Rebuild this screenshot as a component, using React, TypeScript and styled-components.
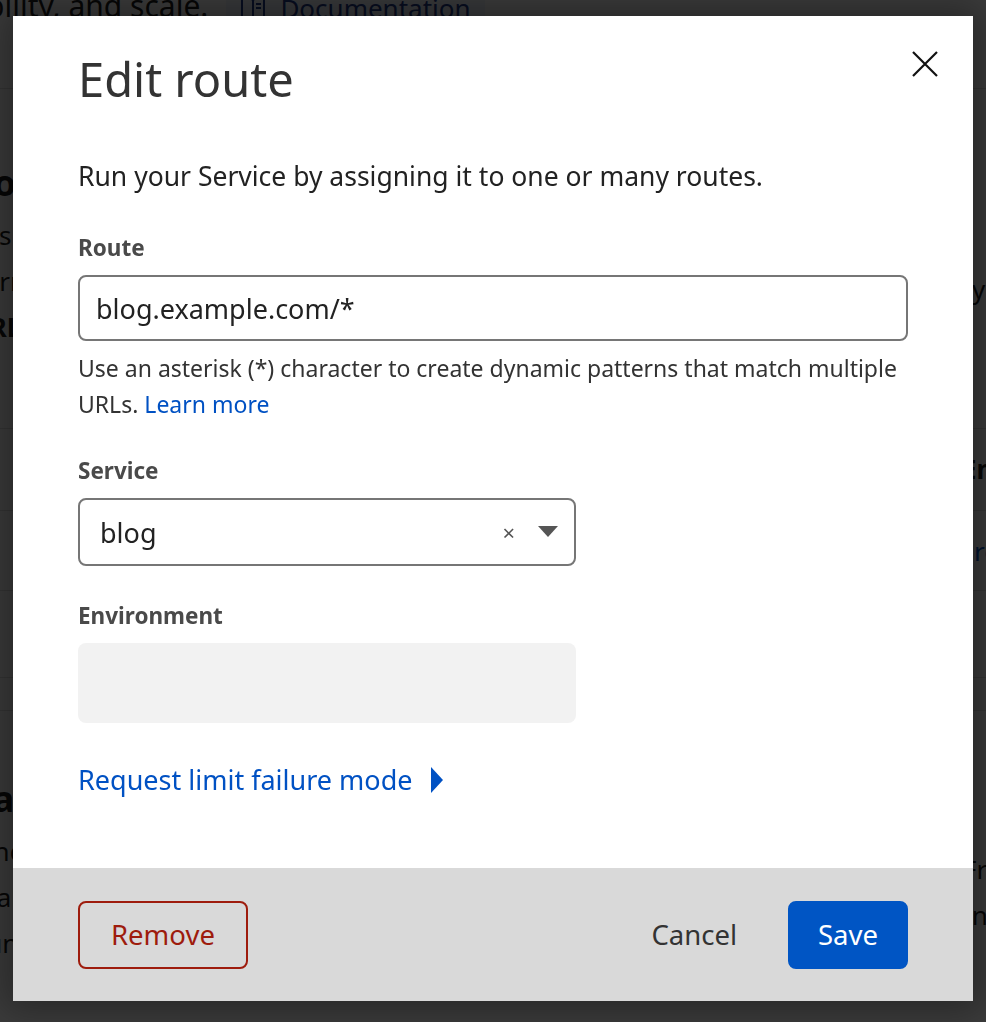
import React from "react";
import styled, { createGlobalStyle } from "styled-components";

const GlobalStyle = createGlobalStyle`
  html, body {
    margin: 0;
    padding: 0;
    height: 100%;
    overflow: hidden;
    background: #fff;
    font-family: "Noto Sans", "Open Sans", sans-serif;
  }
`;

// --- page behind the dialog ---
const Page = styled.div`
  width: 986px;
  height: 1022px;
  overflow: hidden;
  background: #fff;
  color: #1d1d1d;
`;

const PageTop = styled.div`
  display: flex;
  align-items: flex-start;
  gap: 18px;
  margin-top: -14px;
  margin-left: -14px;
  height: 102px;
  font-size: 30px;
  line-height: 40px;
  border-bottom: 1px solid #ddd;
`;

const DocButton = styled.span`
  display: inline-flex;
  align-items: center;
  gap: 14px;
  padding: 0 14px;
  height: 44px;
  background: #eef3fb;
  color: #1f3a8a;
  font-size: 26px;
  border-radius: 6px;
`;

const PageSection = styled.div<{ $h: number }>`
  display: flex;
  justify-content: space-between;
  height: ${(p) => p.$h}px;
  border-bottom: 1px solid #ddd;
`;

const Col = styled.div<{ $right?: boolean; $top?: number }>`
  display: flex;
  flex-direction: column;
  gap: 14px;
  padding-top: ${(p) => p.$top ?? 26}px;
  margin-left: ${(p) => (p.$right ? "0" : "-30px")};
  margin-right: ${(p) => (p.$right ? "-30px" : "0")};
  font-size: 26px;
  line-height: 32px;
`;

const PageHeading = styled.div`
  font-size: 36px;
  line-height: 44px;
  font-weight: 700;
`;

const PageLink = styled.div`
  color: #0051c3;
`;

const Overlay = styled.div`
  position: fixed;
  inset: 0;
  background: rgba(0, 0, 0, 0.77);
`;

// --- dialog ---
const Dialog = styled.div`
  position: fixed;
  top: 16px;
  left: 13px;
  width: 960px;
  height: 985px;
  background: #fff;
  display: flex;
  flex-direction: column;
  box-shadow: 0 0 36px 10px rgba(0, 0, 0, 0.35);
`;

const Body = styled.div`
  flex: 1;
  padding: 35px 65px 0;
  display: flex;
  flex-direction: column;
`;

const Header = styled.div`
  display: flex;
  justify-content: space-between;
  align-items: flex-start;
`;

const Title = styled.h1`
  margin: 0;
  font-size: 47px;
  line-height: 56px;
  font-weight: 400;
  color: #333;
`;

const CloseButton = styled.button`
  border: 0;
  background: none;
  padding: 0;
  margin: -7px -37px 0 0;
  width: 40px;
  height: 40px;
  display: flex;
  align-items: center;
  justify-content: center;
  cursor: pointer;
`;

const Description = styled.p`
  margin: 51px 0 0;
  font-size: 26.5px;
  line-height: 36px;
  color: #222;
`;

const Field = styled.div<{ $top: number }>`
  margin-top: ${(p) => p.$top}px;
  display: flex;
  flex-direction: column;
`;

const Label = styled.label`
  font-size: 22.5px;
  line-height: 28px;
  font-weight: 700;
  color: #4a4a4a;
  margin-bottom: 13px;
`;

const TextInput = styled.div<{ $width?: number; $height: number }>`
  box-sizing: border-box;
  width: ${(p) => (p.$width ? `${p.$width}px` : "100%")};
  height: ${(p) => p.$height}px;
  border: 2px solid #767676;
  border-radius: 8px;
  display: flex;
  align-items: center;
  padding: 0 16px;
  font-size: 27px;
  color: #222;
`;

const SelectValue = styled.span`
  flex: 1;
  padding-left: 4px;
`;

const ClearIcon = styled.span`
  color: #555;
  font-size: 22px;
  margin-right: 23px;
  line-height: 1;
`;

const DisabledBox = styled.div`
  width: 498px;
  height: 80px;
  border-radius: 8px;
  background: #f2f2f2;
`;

const Helper = styled.p`
  margin: 9px 0 0;
  font-size: 23px;
  line-height: 36px;
  color: #333;
`;

const Link = styled.a`
  color: #0051c3;
  text-decoration: none;
`;

const Disclosure = styled.a`
  margin-top: 37px;
  display: flex;
  align-items: center;
  gap: 18px;
  font-size: 27px;
  line-height: 40px;
  color: #0051c3;
  text-decoration: none;
`;

const Footer = styled.div`
  height: 133px;
  box-sizing: border-box;
  background: #d9d9d9;
  padding: 0 65px;
  display: flex;
  align-items: center;
  justify-content: space-between;
`;

const Actions = styled.div`
  display: flex;
  align-items: center;
  gap: 49px;
`;

const Button = styled.button<{ $variant: "danger" | "plain" | "primary" }>`
  box-sizing: border-box;
  height: 68px;
  border-radius: 8px;
  font-family: inherit;
  font-size: 27.5px;
  cursor: pointer;
  padding: 0 ${(p) => (p.$variant === "plain" ? 0 : p.$variant === "primary" ? 28 : 31)}px;
  border: 2px solid
    ${(p) => (p.$variant === "danger" ? "#9e1c0d" : p.$variant === "primary" ? "#0055c4" : "transparent")};
  background: ${(p) => (p.$variant === "primary" ? "#0055c4" : "transparent")};
  color: ${(p) => (p.$variant === "danger" ? "#9e1c0d" : p.$variant === "primary" ? "#fff" : "#333")};
`;

const CloseIcon = () => (
  <svg width="26" height="26" viewBox="0 0 26 26">
    <path d="M1 1 L25 25 M25 1 L1 25" stroke="#111" strokeWidth="2.2" />
  </svg>
);

const CaretDown = () => (
  <svg width="20" height="12" viewBox="0 0 20 12">
    <path d="M0 0 H20 L10 11 Z" fill="#555" />
  </svg>
);

const CaretRight = () => (
  <svg width="14" height="26" viewBox="0 0 14 26">
    <path d="M1 0 L13 13 L1 26 Z" fill="#0051c3" />
  </svg>
);

const BookIcon = () => (
  <svg width="26" height="26" viewBox="0 0 26 26" fill="none" stroke="#1f3a8a" strokeWidth="2">
    <path d="M2 4 H11 Q13 4 13 6 V24 Q13 22 11 22 H2 Z M24 4 H15 Q13 4 13 6 V24 Q13 22 15 22 H24 Z M16 9 H21 M16 13 H21" />
  </svg>
);

export default function App() {
  return (
    <>
      <GlobalStyle />
      <Page>
        <PageTop>
          <span>bility, and scale.</span>
          <DocButton>
            <BookIcon />
            Documentation
          </DocButton>
        </PageTop>
        <PageSection $h={339}>
          <Col $top={72}>
            <PageHeading>Route</PageHeading>
            <span>Assigns</span>
            <span>Form</span>
            <strong>URL</strong>
          </Col>
          <Col $right $top={184}>
            <span>Type</span>
          </Col>
        </PageSection>
        <PageSection $h={81}>
          <Col $top={24} />
          <Col $right $top={24}>
            <strong>Envi</strong>
          </Col>
        </PageSection>
        <PageSection $h={79}>
          <Col $top={24} />
          <Col $right $top={24}>
            <PageLink>Prod</PageLink>
          </Col>
        </PageSection>
        <PageSection $h={86}>
          <Col />
        </PageSection>
        <PageSection $h={32}>
          <Col />
        </PageSection>
        <PageSection $h={320}>
          <Col $top={66}>
            <PageHeading>Vars</PageHeading>
            <span>Bindings</span>
            <span>Scale</span>
            <span>Run</span>
          </Col>
          <Col $right $top={142}>
            <span>Free</span>
            <span>Inc</span>
          </Col>
        </PageSection>
      </Page>
      <Overlay />
      <Dialog role="dialog" aria-labelledby="edit-route-title">
        <Body>
          <Header>
            <Title id="edit-route-title">Edit route</Title>
            <CloseButton aria-label="Close">
              <CloseIcon />
            </CloseButton>
          </Header>
          <Description>Run your Service by assigning it to one or many routes.</Description>
          <Field $top={40}>
            <Label>Route</Label>
            <TextInput $height={66}>blog.example.com/*</TextInput>
            <Helper>
              Use an asterisk (*) character to create dynamic patterns that match multiple URLs.{" "}
              <Link href="#">Learn more</Link>
            </Helper>
          </Field>
          <Field $top={35}>
            <Label>Service</Label>
            <TextInput $width={498} $height={68}>
              <SelectValue>blog</SelectValue>
              <ClearIcon>×</ClearIcon>
              <CaretDown />
            </TextInput>
          </Field>
          <Field $top={36}>
            <Label>Environment</Label>
            <DisabledBox />
          </Field>
          <Disclosure href="#">
            Request limit failure mode
            <CaretRight />
          </Disclosure>
        </Body>
        <Footer>
          <Button $variant="danger">Remove</Button>
          <Actions>
            <Button $variant="plain">Cancel</Button>
            <Button $variant="primary">Save</Button>
          </Actions>
        </Footer>
      </Dialog>
    </>
  );
}
